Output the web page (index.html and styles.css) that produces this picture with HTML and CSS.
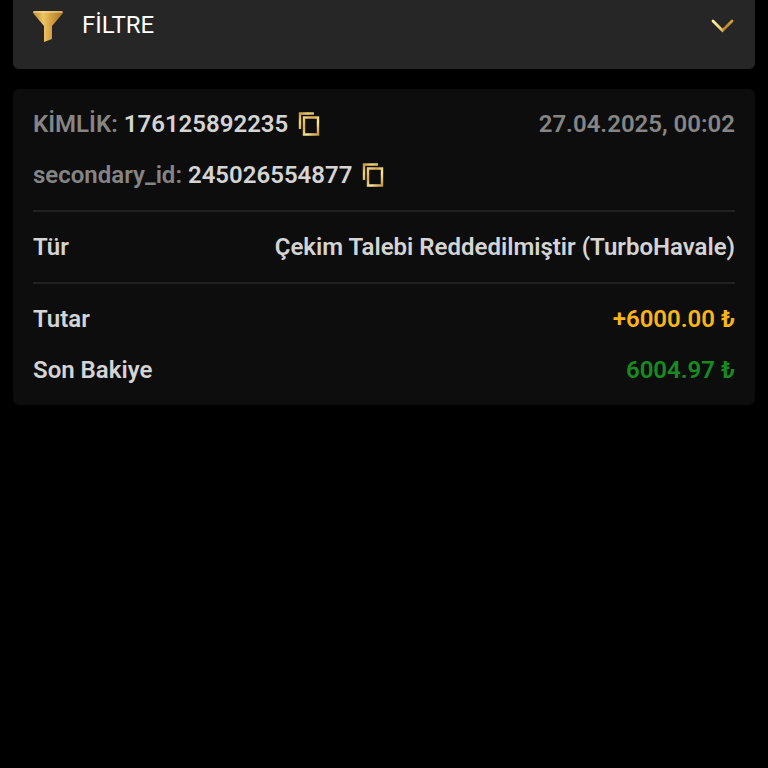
FILE: index.html
```html
<!DOCTYPE html>
<html lang="tr">
<head>
<meta charset="utf-8">
<meta name="viewport" content="width=device-width, initial-scale=1">
<title>Filtre</title>
<link rel="stylesheet" href="styles.css">
</head>
<body>
<svg class="defs" width="0" height="0" aria-hidden="true">
  <defs>
    <linearGradient id="gold" x1="0" y1="0" x2="1" y2="1">
      <stop offset="0" stop-color="#c79a45"/>
      <stop offset=".2" stop-color="#f0d27c"/>
      <stop offset=".45" stop-color="#d8ae58"/>
      <stop offset=".7" stop-color="#fbe7a0"/>
      <stop offset="1" stop-color="#c7983f"/>
    </linearGradient>
    <linearGradient id="arrow" x1="0" y1="0" x2="1" y2="0">
      <stop offset="0" stop-color="#fdf0a8"/>
      <stop offset=".4" stop-color="#f0d070"/>
      <stop offset=".6" stop-color="#b5832d"/>
      <stop offset="1" stop-color="#cfa040"/>
    </linearGradient>
    <linearGradient id="funnel" x1="0" y1="0" x2="1" y2="0">
      <stop offset="0" stop-color="#c08a2e"/>
      <stop offset=".35" stop-color="#ecc566"/>
      <stop offset=".6" stop-color="#d5a042"/>
      <stop offset="1" stop-color="#a87424"/>
    </linearGradient>
  </defs>
</svg>
<main class="page">
  <button class="filter" type="button" aria-expanded="false">
    <svg class="funnel" viewBox="0 0 30 32"><path fill="url(#funnel)" d="M0 2H30V4L19 17V30L11 33V17L0 4Z"/><path stroke="#f8e3a0" d="M1 3H29"/></svg>
    <span class="filter-label">FİLTRE</span>
    <svg class="chevron" viewBox="0 0 24 16"><path fill="none" stroke="url(#arrow)" stroke-width="2.8" stroke-linecap="round" d="M2 4L11.5 13.5L21 4"/></svg>
  </button>
  <section class="card">
    <div class="row">
      <div class="pair"><span class="muted">KİMLİK:</span><span>176125892235</span>
        <button class="copy" type="button" aria-label="Kopyala"><svg viewBox="0 0 22 26"><path fill="none" stroke="url(#gold)" stroke-width="2.4" d="M2 18V2.5H16M6 6.5H20V23.5H6Z"/></svg></button>
      </div>
      <time class="muted" datetime="2025-04-27T00:02">27.04.2025, 00:02</time>
    </div>
    <div class="row">
      <div class="pair"><span class="muted">secondary_id:</span><span>245026554877</span>
        <button class="copy" type="button" aria-label="Kopyala"><svg viewBox="0 0 22 26"><path fill="none" stroke="url(#gold)" stroke-width="2.4" d="M2 18V2.5H16M6 6.5H20V23.5H6Z"/></svg></button>
      </div>
    </div>
    <hr>
    <div class="row"><span>Tür</span><span>Çekim Talebi Reddedilmiştir (TurboHavale)</span></div>
    <hr>
    <div class="row"><span>Tutar</span><span class="amount">+6000.00 ₺</span></div>
    <div class="row"><span>Son Bakiye</span><span class="balance">6004.97 ₺</span></div>
  </section>
</main>
</body>
</html>
```
FILE: styles.css
```css
* { box-sizing: border-box; }
body {
  margin: 0;
  background: #000;
  color: #d4d4d4;
  font: 600 24px/32px Roboto, "Noto Sans", sans-serif;
}
button { border: 0; padding: 0; background: none; font: inherit; color: inherit; cursor: pointer; }
svg { display: block; }
.defs { position: absolute; }
.page {
  display: flex;
  flex-direction: column;
  gap: 20px;
  padding: 0 13px;
}
.filter {
  display: flex;
  align-items: center;
  gap: 19px;
  padding: 9px 20px 28px;
  background: #262626;
  border-radius: 0 0 6px 6px;
  font-weight: 400;
  color: #fff;
}
.funnel { width: 30px; height: 32px; overflow: visible; }
.filter-label { flex: 1; text-align: left; }
.chevron { width: 24px; height: 16px; }
.card {
  display: flex;
  flex-direction: column;
  gap: 19px;
  padding: 19px 20px;
  background: #0d0d0d;
  border-radius: 6px;
}
.row { display: flex; justify-content: space-between; }
.pair { display: flex; align-items: center; gap: 6px; }
.copy { margin-left: 4px; }
.copy svg { width: 22px; height: 26px; }
.muted { color: #858585; }
hr { width: 100%; height: 2px; margin: 0; border: 0; background: #212121; }
.amount { color: #fbb616; }
.balance { color: #178a22; }
```
